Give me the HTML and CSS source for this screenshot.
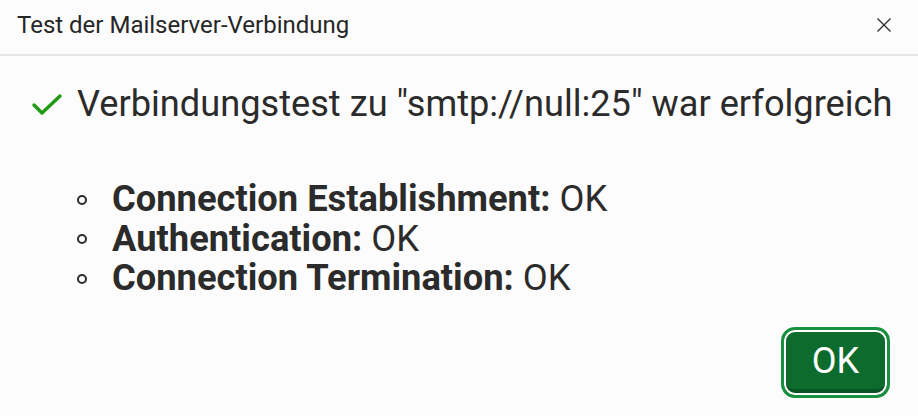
FILE: index.html
```html
<!DOCTYPE html>
<html lang="de">
  <head>
    <meta charset="utf-8" />
    <title>Test der Mailserver-Verbindung</title>
    <link rel="stylesheet" href="styles.css">
  </head>
  <body>
    <div class="dialog">
      <!-- Kopfzeile -->
      <div class="dialog-header">
        <span class="dialog-title">Test der Mailserver-Verbindung</span>
        <button class="dialog-close" aria-label="Schließen">
          <svg width="16" height="16" viewBox="0 0 16 16">
            <path d="M1.5 1.5 L14.5 14.5 M14.5 1.5 L1.5 14.5" stroke="#333" stroke-width="1.4" fill="none" />
          </svg>
        </button>
      </div>
      <!-- Inhalt -->
      <div class="dialog-body">
        <div class="result">
          <svg class="result-icon" width="32" height="24" viewBox="0 0 32 24">
            <path d="M3 13 L11 21 L29 4" stroke="#1f9a14" stroke-width="3.4" fill="none" stroke-linecap="round" stroke-linejoin="round" />
          </svg>
          <span>Verbindungstest zu "smtp://null:25" war erfolgreich</span>
        </div>
        <ul class="steps">
          <li><b>Connection Establishment:</b> OK</li>
          <li><b>Authentication:</b> OK</li>
          <li><b>Connection Termination:</b> OK</li>
        </ul>
      </div>
      <div class="dialog-footer">
        <button class="btn-ok">OK</button>
      </div>
    </div>
  </body>
</html>
```

FILE: styles.css
```css
html, body {
  margin: 0;
  padding: 0;
  background: #fcfcfc;
}
body {
  font-family: Roboto, "Noto Sans", sans-serif;
  color: #2a2a2a;
}
.dialog {
  width: 918px;
  height: 416px;
  display: flex;
  flex-direction: column;
}
.dialog-header {
  height: 56px;
  box-sizing: border-box;
  border-bottom: 2px solid #e8e8e8;
  display: flex;
  align-items: center;
  justify-content: space-between;
  padding: 0 26px 5px 17px;
}
.dialog-title {
  font-size: 24px;
  color: #262626;
}
.dialog-close {
  border: 0;
  background: none;
  padding: 0;
  width: 16px;
  height: 16px;
  display: flex;
  cursor: pointer;
}
.dialog-body {
  flex: 1;
  padding: 26px 0 0 31px;
}
.result {
  display: flex;
  align-items: center;
  gap: 14px;
  font-size: 36.2px;
  line-height: 44px;
  color: #2b2b2b;
}
.result-icon {
  flex: none;
  margin-top: -1px;
}
.steps {
  margin: 53px 0 0 0;
  padding: 0 0 0 81px;
  list-style: none;
  font-size: 36.3px;
  line-height: 39.5px;
  color: #2b2b2b;
}
.steps li::before {
  content: "";
  display: inline-block;
  vertical-align: middle;
  width: 6px;
  height: 6px;
  border: 2px solid #2b2b2b;
  border-radius: 50%;
  margin: -3px 25px 0 -35px;
}
.steps b {
  font-weight: 700;
}
.dialog-footer {
  display: flex;
  justify-content: flex-end;
  padding: 0 28px 18px 0;
}
.btn-ok {
  width: 109px;
  height: 71px;
  box-sizing: border-box;
  border: 3px solid #17913f;
  border-radius: 14px;
  background: #0e6b2e;
  box-shadow: inset 0 0 0 2px #fff, inset 0 -6px 0 #0a5322;
  color: #fff;
  font-family: Roboto, sans-serif;
  font-size: 36px;
  cursor: pointer;
  padding: 0 0 3px 0;
}
```
